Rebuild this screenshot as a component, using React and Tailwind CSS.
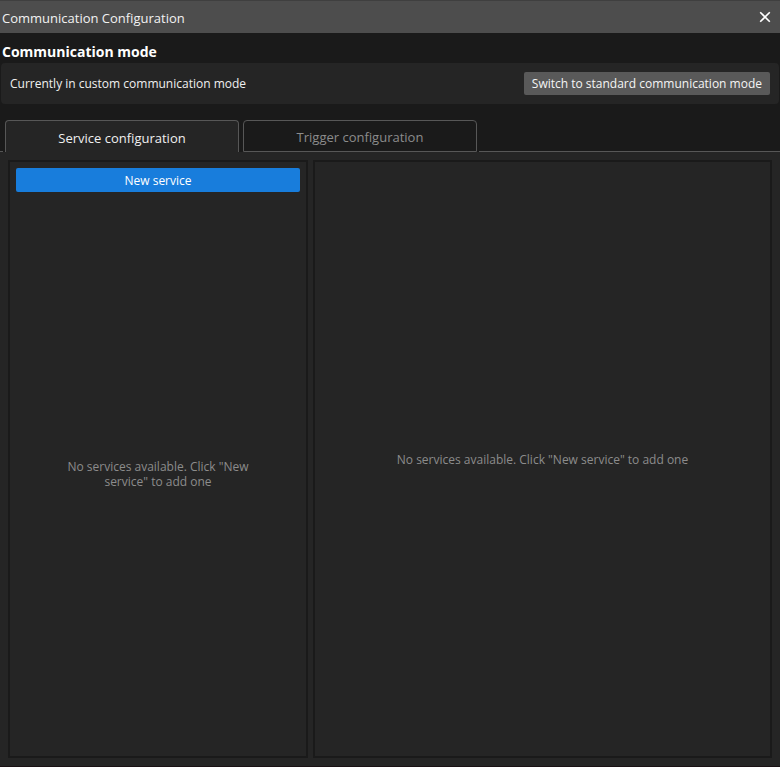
import { useState } from "react";

const tabs = [
  { id: "service", label: "Service configuration" },
  { id: "trigger", label: "Trigger configuration" },
];

function TitleBar() {
  return (
    <header className="flex h-[33px] shrink-0 items-center justify-between border-t border-[#3f3f3f] bg-[#4d4d4d] pr-[7px] pl-0.5">
      <h1 className="pt-0.5 text-[13px] leading-5 text-[#f2f2f2]">Communication Configuration</h1>
      <button type="button" aria-label="Close" className="flex size-4 items-center justify-center text-white">
        <svg viewBox="0 0 14 14" className="size-[14px]" fill="none" stroke="currentColor" strokeWidth="1.6">
          <path d="M2.2 2.2 L11.8 11.8 M11.8 2.2 L2.2 11.8" />
        </svg>
      </button>
    </header>
  );
}

function CommunicationMode() {
  return (
    <section className="shrink-0 px-px">
      <h2 className="flex h-[30px] items-end pb-px pl-px text-[14px] leading-5 font-bold text-white">
        Communication mode
      </h2>
      <div className="flex h-[41px] items-center justify-between rounded-sm bg-[#252525] px-[9px]">
        <p className="text-[12px] leading-4 text-[#f0f0f0]">Currently in custom communication mode</p>
        <button
          type="button"
          className="flex h-[23px] items-center justify-center rounded-xs bg-[#595959] px-2 text-[12px] leading-4 text-[#f5f5f5]"
        >
          Switch to standard communication mode
        </button>
      </div>
    </section>
  );
}

export default function App() {
  const [active, setActive] = useState("service");

  return (
    <div className="flex min-h-screen flex-col bg-[#1a1a1a] font-['Open_Sans','Noto_Sans',sans-serif]">
      <TitleBar />
      <CommunicationMode />

      <div role="tablist" className="mt-4 flex h-8 shrink-0 bg-[#1a1a1a]">
        <span className="mr-0.5 w-[3px] border-b border-[#575757]" />
        {tabs.map((tab) => (
          <button
            key={tab.id}
            id={`${tab.id}-tab`}
            type="button"
            role="tab"
            aria-selected={active === tab.id}
            aria-controls="configuration-panel"
            onClick={() => setActive(tab.id)}
            className={
              active === tab.id
                ? "mr-1 w-[234px] rounded-t-sm border border-b-0 border-[#575757] bg-[#252525] pt-0.5 text-[13px] leading-5 text-[#f0f0f0]"
                : "mr-0.5 w-[234px] rounded-t-sm border border-[#575757] bg-[#1a1a1a] pt-0.5 text-[13px] leading-5 text-[#8c8c8c]"
            }
          >
            {tab.label}
          </button>
        ))}
        <span className="flex-1 border-b border-[#575757]" />
      </div>

      <main
        id="configuration-panel"
        role="tabpanel"
        aria-labelledby={`${active}-tab`}
        className="flex flex-1 gap-[5px] border-b border-[#1a1114] bg-[#252525] p-2"
      >
        <aside className="flex w-[300px] shrink-0 flex-col border-2 border-[#1a1a1a] p-1.5">
          <button
            type="button"
            className="h-6 shrink-0 rounded-xs bg-[#187ddc] pt-0.5 text-[12px] leading-4 text-white"
          >
            New service
          </button>
          <div className="flex flex-1 items-center justify-center pt-1.5">
            <p className="w-[200px] text-center text-[12px] leading-[15px] text-[#8c8c8c]">
              No services available. Click "New service" to add one
            </p>
          </div>
        </aside>
        <section className="flex min-w-0 flex-1 items-center justify-center border-2 border-[#1a1a1a]">
          <p className="text-center text-[12px] leading-[15px] text-[#8c8c8c]">
            No services available. Click "New service" to add one
          </p>
        </section>
      </main>
    </div>
  );
}
